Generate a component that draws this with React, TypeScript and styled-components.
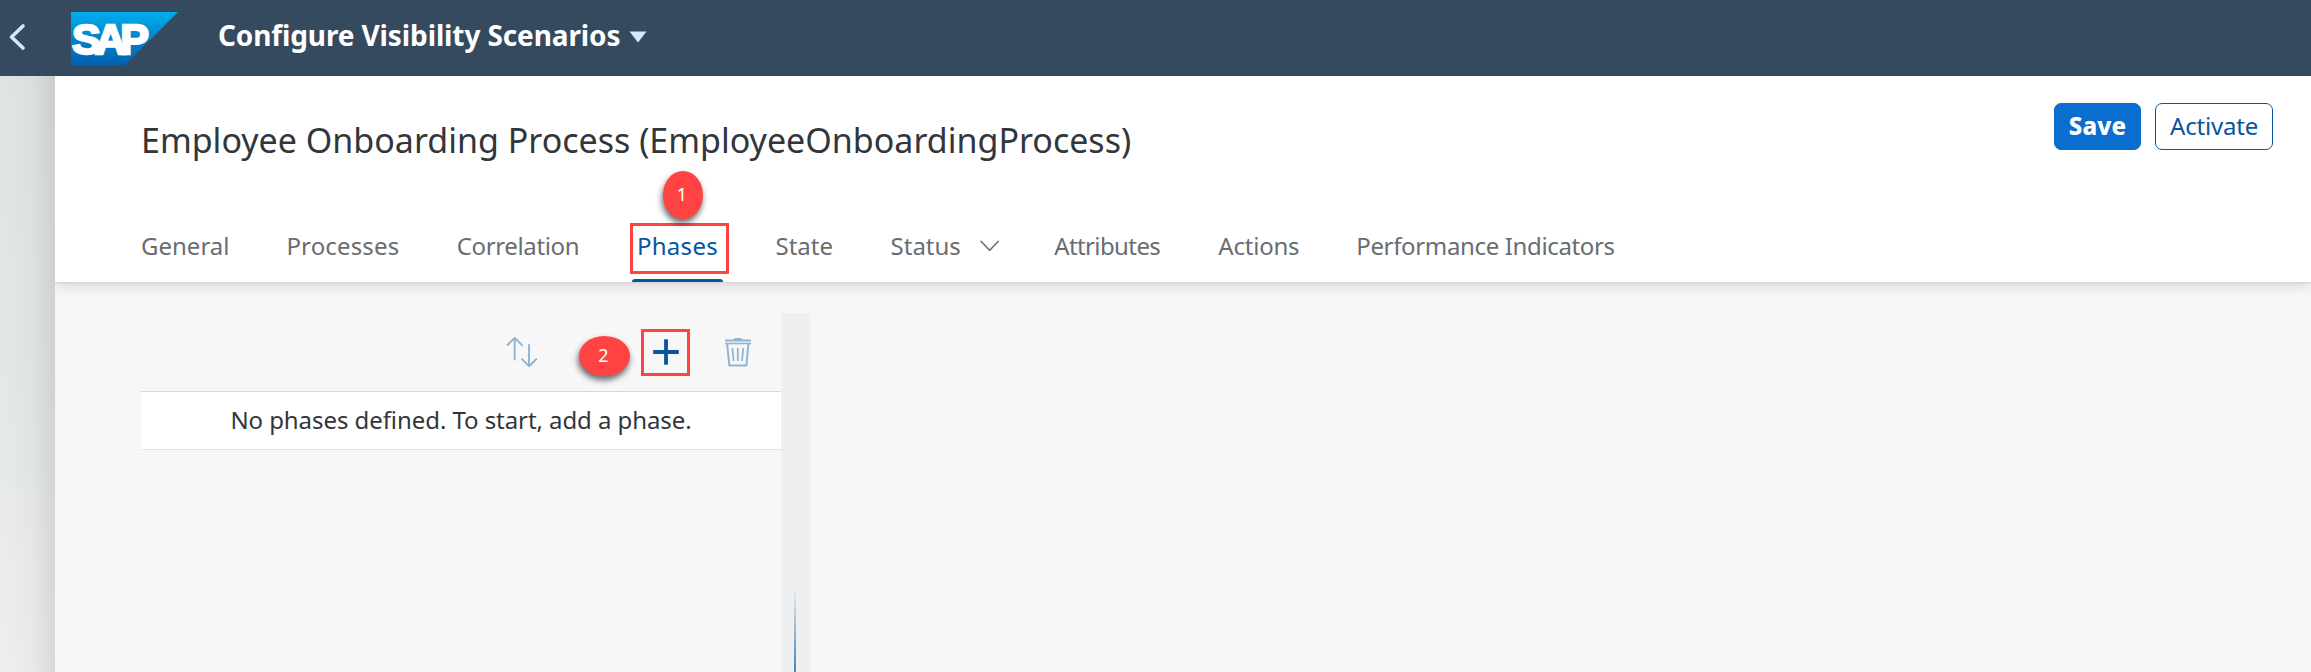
import React from "react";
import styled, { createGlobalStyle } from "styled-components";

const GlobalStyle = createGlobalStyle`
  * { box-sizing: border-box; }
  body {
    margin: 0;
    overflow: hidden;
    font-family: "Noto Sans", "Open Sans", sans-serif;
    font-size: 24px;
    color: #32363a;
    background: #f7f7f7;
  }
  button { font: inherit; cursor: pointer; }
`;

const Shell = styled.div`
  display: flex;
  flex-direction: column;
  height: 672px;
`;

const ShellBar = styled.header`
  display: flex;
  align-items: center;
  flex: none;
  height: 76px;
  background: #354a5f;
`;

const BackIcon = styled.svg`
  width: 20px;
  height: 30px;
  margin: -3px 0 0 7px;
`;

const Logo = styled.svg`
  width: 107px;
  height: 53px;
  margin: 1px 0 0 44px;
`;

const AppTitle = styled.span`
  margin: -6px 0 0 40px;
  font-size: 28px;
  font-weight: 700;
  line-height: 38px;
  letter-spacing: -0.12px;
  white-space: nowrap;
  color: #fff;
`;

const MenuArrow = styled.svg`
  width: 18px;
  height: 12px;
  margin: -3px 0 0 9px;
`;

const Body = styled.div`
  display: flex;
  flex: 1;
  min-height: 0;
`;

const Gutter = styled.div`
  flex: none;
  width: 55px;
  background:
    linear-gradient(to right, rgba(0, 0, 0, 0) 15%, rgba(0, 0, 0, 0.025) 60%, rgba(0, 0, 0, 0.09) 100%),
    linear-gradient(to bottom, #dfe3e3 0%, #e4e8e8 60%, #ececee 85%, #eeeeee 100%);
`;

const Page = styled.main`
  display: flex;
  flex: 1;
  flex-direction: column;
  min-width: 0;
`;

const PageHeader = styled.section`
  position: relative;
  flex: none;
  height: 206px;
  background: #fff;
  box-shadow: 0 1.5px 0 #d9d9d9, 0 3px 13px rgba(0, 0, 0, 0.15);
  clip-path: inset(0 0 -20px 0);
`;

const TitleRow = styled.div`
  display: flex;
  justify-content: space-between;
  height: 127px;
  padding: 0 38px 0 86px;
`;

const PageTitle = styled.h1`
  margin: 0;
  font-size: 34px;
  font-weight: 400;
  line-height: 129px;
  letter-spacing: 0;
  white-space: nowrap;
`;

const Actions = styled.div`
  display: flex;
  gap: 14px;
  padding-top: 27px;
`;

const Button = styled.button<{ $primary?: boolean; $width: number }>`
  width: ${(p) => p.$width}px;
  height: 47px;
  padding: 0 0 2px;
  border: 1px solid ${(p) => (p.$primary ? "#0a6ed1" : "#0854a0")};
  border-radius: 7px;
  background: ${(p) => (p.$primary ? "#0a6ed1" : "#fff")};
  color: ${(p) => (p.$primary ? "#fff" : "#0854a0")};
  font-weight: ${(p) => (p.$primary ? 800 : 400)};
  letter-spacing: ${(p) => (p.$primary ? 0.2 : -0.2)}px;
`;

const TabBar = styled.nav`
  display: flex;
  gap: 55px;
  height: 79px;
  padding-left: 86px;
`;

const Tab = styled.div<{ $width: number; $tracking?: number; $active?: boolean }>`
  position: relative;
  display: flex;
  align-items: center;
  flex: none;
  width: ${(p) => p.$width}px;
  padding-top: 6px;
  letter-spacing: ${(p) => p.$tracking ?? 0}px;
  white-space: nowrap;
  color: ${(p) => (p.$active ? "#0854a0" : "#6a6d70")};
  ${(p) =>
    p.$active &&
    `&::after {
      content: "";
      position: absolute;
      left: -5px;
      bottom: 0;
      width: 91px;
      height: 3px;
      border-radius: 3px 3px 0 0;
      background: #0854a0;
    }`}
`;

const TabChevron = styled.svg`
  width: 20px;
  height: 12px;
  margin-left: 19px;
`;

const Content = styled.div`
  display: flex;
  flex: 1;
  min-height: 0;
  padding: 31px 0 0 86px;
`;

const PhasePane = styled.section`
  width: 640px;
`;

const Toolbar = styled.div`
  display: flex;
  align-items: center;
  justify-content: flex-end;
  height: 78px;
  padding-right: 29px;
`;

const ToolButton = styled.div<{ $gap?: number }>`
  position: relative;
  display: flex;
  margin-left: ${(p) => p.$gap ?? 0}px;
  svg { display: block; }
`;

const EmptyRow = styled.div`
  height: 59px;
  padding: 0 0 2px;
  border-top: 1px solid #d9d9d9;
  border-bottom: 1px solid #e4e4e4;
  background: #fff;
  line-height: 56px;
  text-align: center;
  letter-spacing: -0.07px;
`;

const Splitter = styled.div`
  display: flex;
  justify-content: center;
  align-items: flex-end;
  width: 29px;
  background: #edeff0;
`;

const SplitterGrip = styled.div`
  width: 2px;
  height: 85px;
  margin-right: 1px;
  background: linear-gradient(to bottom, rgba(8, 84, 160, 0), #4a80b9);
`;

const Highlight = styled.span<{ $x: number; $y: number; $w: number; $h: number }>`
  position: absolute;
  left: ${(p) => p.$x}px;
  top: ${(p) => p.$y}px;
  width: ${(p) => p.$w}px;
  height: ${(p) => p.$h}px;
  border: 3px solid #ff4343;
`;

const Marker = styled.span<{ $x: number; $y: number; $w: number; $h: number }>`
  position: absolute;
  left: ${(p) => p.$x}px;
  top: ${(p) => p.$y}px;
  width: ${(p) => p.$w}px;
  height: ${(p) => p.$h}px;
  border-radius: 50%;
  background: #ff4343;
  box-shadow: -1px 4px 6px rgba(0, 0, 0, 0.6);
  color: #fff;
  font-size: 18px;
  line-height: ${(p) => p.$h - 2}px;
  letter-spacing: 0;
  text-align: center;
  padding-right: 2px;
`;

export default function App() {
  return (
    <>
      <GlobalStyle />
      <Shell>
        <ShellBar>
          <BackIcon viewBox="0 0 20 30">
            <path d="M16 4 L4.5 15 L16 26" fill="none" stroke="#d1e8ff" strokeWidth="3.6" strokeLinecap="round" strokeLinejoin="round" />
          </BackIcon>
          <Logo viewBox="0 0 107 53">
            <defs>
              <linearGradient id="logoBlue" x1="0" y1="0" x2="0" y2="1">
                <stop offset="0" stopColor="#00aeef" />
                <stop offset="0.5" stopColor="#0083ca" />
                <stop offset="1" stopColor="#0062b1" />
              </linearGradient>
            </defs>
            <path d="M0 0H107L54 53H0Z" fill="url(#logoBlue)" />
            <text x="1" y="41.5" fill="#fff" stroke="#fff" strokeWidth="2.4" fontFamily="Liberation Sans, Arial, sans-serif" fontWeight="700" fontSize="43" textLength="77" lengthAdjust="spacing">
              SAP
            </text>
          </Logo>
          <AppTitle>Configure Visibility Scenarios</AppTitle>
          <MenuArrow viewBox="0 0 18 12">
            <path d="M0.5 0.5H17.5L9 11.5Z" fill="#d1e8ff" />
          </MenuArrow>
        </ShellBar>
        <Body>
          <Gutter />
          <Page>
            <PageHeader>
              <TitleRow>
                <PageTitle>Employee Onboarding Process (EmployeeOnboardingProcess)</PageTitle>
                <Actions>
                  <Button $primary $width={87}>Save</Button>
                  <Button $width={118}>Activate</Button>
                </Actions>
              </TitleRow>
              <TabBar>
                <Tab $width={90.4}>General</Tab>
                <Tab $width={115.3} $tracking={0.15}>Processes</Tab>
                <Tab $width={125.2} $tracking={-0.35}>Correlation</Tab>
                <Tab $width={83.6} $tracking={0.3} $active>
                  Phases
                  <Highlight $x={-7} $y={20} $w={99} $h={51} />
                  <Marker $x={26} $y={-32} $w={40} $h={48}>1</Marker>
                </Tab>
                <Tab $width={60.1}>State</Tab>
                <Tab $width={108.6}>
                  Status
                  <TabChevron viewBox="0 0 20 12">
                    <path d="M1 1 L10 10.5 L19 1" fill="none" stroke="#6a6d70" strokeWidth="1.5" strokeLinecap="round" />
                  </TabChevron>
                </Tab>
                <Tab $width={109.1} $tracking={-0.6}>Attributes</Tab>
                <Tab $width={83} $tracking={-0.2}>Actions</Tab>
                <Tab $width={262} $tracking={-0.35}>Performance Indicators</Tab>
              </TabBar>
            </PageHeader>
            <Content>
              <PhasePane>
                <Toolbar>
                  <ToolButton>
                    <svg width="32" height="32" viewBox="0 0 32 32" fill="none" stroke="#91b4d5" strokeWidth="1.9" strokeLinecap="round" strokeLinejoin="round">
                      <path d="M8.7 23.5V2M1.5 9L8.7 1.8L15.9 9M23 9V30M16 23.2L23 30.2L30.2 23.2" />
                    </svg>
                  </ToolButton>
                  <ToolButton $gap={114}>
                    <svg width="28" height="28" viewBox="0 0 28 28" fill="none" stroke="#0854a0" strokeWidth="3.8">
                      <path d="M14 1.2V26.8M1.2 14H26.8" />
                    </svg>
                    <Highlight $x={-11} $y={-9} $w={49} $h={47} />
                    <Marker $x={-73} $y={-2} $w={51} $h={40}>2</Marker>
                  </ToolButton>
                  <ToolButton $gap={44}>
                    <svg width="28" height="30" viewBox="0 0 28 30" fill="none" stroke="#91b4d5">
                      <path d="M1 3.5H27" strokeWidth="2" />
                      <path d="M1 6.5H27" strokeWidth="1.6" />
                      <path d="M9 3.2L11 1H17L19 3.2Z" fill="#91b4d5" stroke="none" />
                      <path d="M3.2 7L5.3 28.4H22.4L24.4 7" strokeWidth="2" strokeLinejoin="round" />
                      <path d="M8.4 11L9.6 24M13.8 11V24M19.2 11L18 24" strokeWidth="1.8" />
                    </svg>
                  </ToolButton>
                </Toolbar>
                <EmptyRow>No phases defined. To start, add a phase.</EmptyRow>
              </PhasePane>
              <Splitter>
                <SplitterGrip />
              </Splitter>
            </Content>
          </Page>
        </Body>
      </Shell>
    </>
  );
}
